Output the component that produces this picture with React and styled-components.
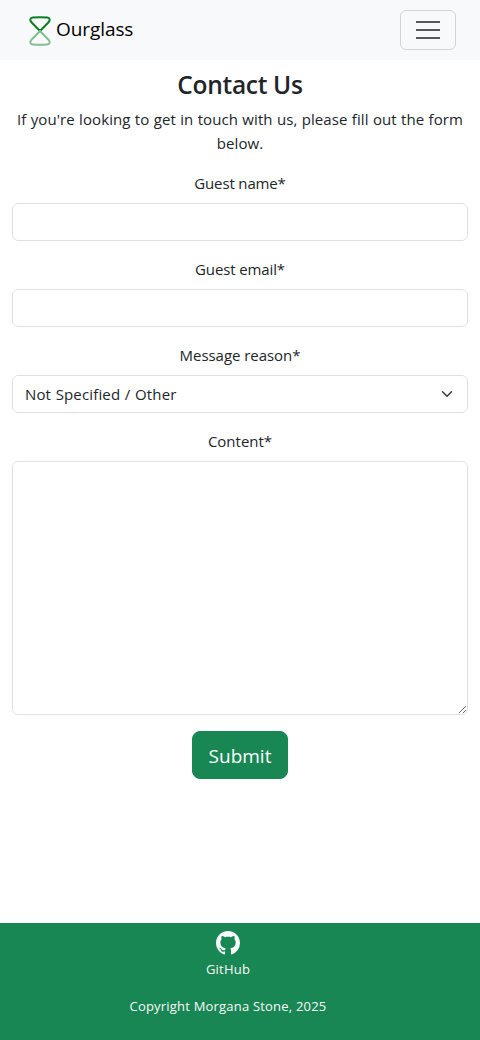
import React from 'react';
import styled, { createGlobalStyle } from 'styled-components';

const GlobalStyle = createGlobalStyle`
  *, *::before, *::after { box-sizing: border-box; }
  body {
    margin: 0;
    background: #fff;
    color: #212529;
    font-family: "Segoe UI", "Open Sans", "Noto Sans", sans-serif;
    font-size: 15px;
    line-height: 24px;
  }
`;

const Page = styled.div`
  display: flex;
  flex-direction: column;
  min-height: 1040px;
`;

const Navbar = styled.nav`
  display: flex;
  align-items: center;
  justify-content: space-between;
  height: 60px;
  padding: 0 24px 0 28px;
  background: #f8f9fa;
`;

const Brand = styled.a`
  display: flex;
  align-items: center;
  gap: 4px;
  color: #000;
  font-size: 19px;
  line-height: 30px;
  letter-spacing: -0.08px;
  text-decoration: none;

  svg { margin-top: 2px; }
  span { margin-top: -2px; }
`;

const Toggler = styled.button`
  display: flex;
  align-items: center;
  justify-content: center;
  width: 56px;
  height: 40px;
  padding: 0;
  border: 1px solid #d3d4d6;
  border-radius: 6px;
  background: transparent;
`;

const Main = styled.main`
  flex: 1;
  padding: 9px 12px 0;
  text-align: center;
`;

const Title = styled.h2`
  margin: 0 0 7px;
  font-size: 24.5px;
  font-weight: 600;
  line-height: 31px;
  letter-spacing: -0.3px;
`;

const Intro = styled.p`
  margin: 0 0 16px;
  letter-spacing: 0.09px;
  word-spacing: 0.3px;
`;

const Field = styled.div`
  display: flex;
  flex-direction: column;
  margin-bottom: 16px;
`;

const Label = styled.label`
  margin-bottom: 8px;
  letter-spacing: ${(p) => p.$spacing || '0'};
`;

const Input = styled.input`
  height: 38px;
  padding: 6px 12px;
  border: 1px solid #dee2e6;
  border-radius: 6px;
  background: #fff;
  font: inherit;
`;

const SelectBox = styled.button`
  display: flex;
  align-items: center;
  justify-content: space-between;
  height: 38px;
  padding: 0 12px;
  border: 1px solid #dee2e6;
  border-radius: 6px;
  background: #fff;
  color: inherit;
  font: inherit;
  letter-spacing: 0.15px;
  word-spacing: 0.5px;
`;

const TextArea = styled.textarea`
  height: 254px;
  padding: 6px 12px;
  border: 1px solid #dee2e6;
  border-radius: 6px;
  background: #fff;
  font: inherit;
  resize: vertical;
`;

const Submit = styled.button`
  width: 96px;
  height: 48px;
  padding: 2px 0 0;
  border: 1px solid #198754;
  border-radius: 8px;
  background: #198754;
  color: #fff;
  font: inherit;
  font-size: 19px;
  line-height: 30px;
`;

const Footer = styled.footer`
  display: flex;
  flex-direction: column;
  align-items: center;
  height: 117px;
  padding: 8px 24px 0 0;
  background: #198754;
  color: #f8f9fa;
  font-size: 13px;
  line-height: 21px;
  letter-spacing: 0.2px;
`;

const FooterLink = styled.a`
  display: flex;
  flex-direction: column;
  align-items: center;
  gap: 4px;
  margin-bottom: 16px;
  color: inherit;
  text-decoration: none;
`;

const Hourglass = () => (
  <svg width="24" height="30" viewBox="0 0 24 30" fill="none" strokeWidth="2" strokeLinejoin="round">
    <path d="M12 15L3.2 6C1.6 3.8 2.3 1.6 4.8 1.4Q12 .9 19.2 1.4C21.7 1.6 22.4 3.8 20.8 6Z" stroke="#0a7d22" />
    <path d="M12 15L3.2 24C1.6 26.2 2.3 28.4 4.8 28.6Q12 29.1 19.2 28.6C21.7 28.4 22.4 26.2 20.8 24Z" stroke="#84be91" />
  </svg>
);

const MenuIcon = () => (
  <svg width="30" height="30" viewBox="0 0 30 30" stroke="#212529" strokeOpacity=".75" strokeWidth="2">
    <path d="M3 7h24M3 15h24M3 23h24" />
  </svg>
);

const Chevron = () => (
  <svg width="16" height="12" viewBox="0 0 16 16" fill="none" stroke="#343a40" strokeWidth="2" strokeLinecap="round" strokeLinejoin="round">
    <path d="m2 5 6 6 6-6" />
  </svg>
);

const GithubMark = () => (
  <svg width="24" height="24" viewBox="0 0 16 16" fill="currentColor">
    <path d="M8 0C3.58 0 0 3.58 0 8c0 3.54 2.29 6.53 5.47 7.59.4.07.55-.17.55-.38 0-.19-.01-.82-.01-1.49-2.01.37-2.53-.49-2.69-.94-.09-.23-.48-.94-.82-1.13-.28-.15-.68-.52-.01-.53.63-.01 1.08.58 1.23.82.72 1.21 1.87.87 2.33.66.07-.52.28-.87.51-1.07-1.78-.2-3.64-.89-3.64-3.95 0-.87.31-1.59.82-2.15-.08-.2-.36-1.02.08-2.12 0 0 .67-.21 2.2.82.64-.18 1.32-.27 2-.27s1.36.09 2 .27c1.53-1.04 2.2-.82 2.2-.82.44 1.1.16 1.92.08 2.12.51.56.82 1.27.82 2.15 0 3.07-1.87 3.75-3.65 3.95.29.25.54.73.54 1.48 0 1.07-.01 1.93-.01 2.2 0 .21.15.46.55.38A8.01 8.01 0 0 0 16 8c0-4.42-3.58-8-8-8" />
  </svg>
);

export default function App() {
  return (
    <Page>
      <GlobalStyle />
      <Navbar>
        <Brand>
          <Hourglass />
          <span>Ourglass</span>
        </Brand>
        <Toggler aria-label="Toggle navigation">
          <MenuIcon />
        </Toggler>
      </Navbar>
      <Main>
        <Title>Contact Us</Title>
        <Intro>If you're looking to get in touch with us, please fill out the form below.</Intro>
        <Field>
          <Label htmlFor="name" $spacing="-0.15px">Guest name*</Label>
          <Input id="name" />
        </Field>
        <Field>
          <Label htmlFor="email" $spacing="-0.12px">Guest email*</Label>
          <Input id="email" type="email" />
        </Field>
        <Field>
          <Label htmlFor="reason" $spacing="-0.05px">Message reason*</Label>
          <SelectBox id="reason" type="button">
            <span>Not Specified / Other</span>
            <Chevron />
          </SelectBox>
        </Field>
        <Field>
          <Label htmlFor="content">Content*</Label>
          <TextArea id="content" />
        </Field>
        <Submit type="submit">Submit</Submit>
      </Main>
      <Footer>
        <FooterLink>
          <GithubMark />
          <span>GitHub</span>
        </FooterLink>
        <span>Copyright Morgana Stone, 2025</span>
      </Footer>
    </Page>
  );
}
